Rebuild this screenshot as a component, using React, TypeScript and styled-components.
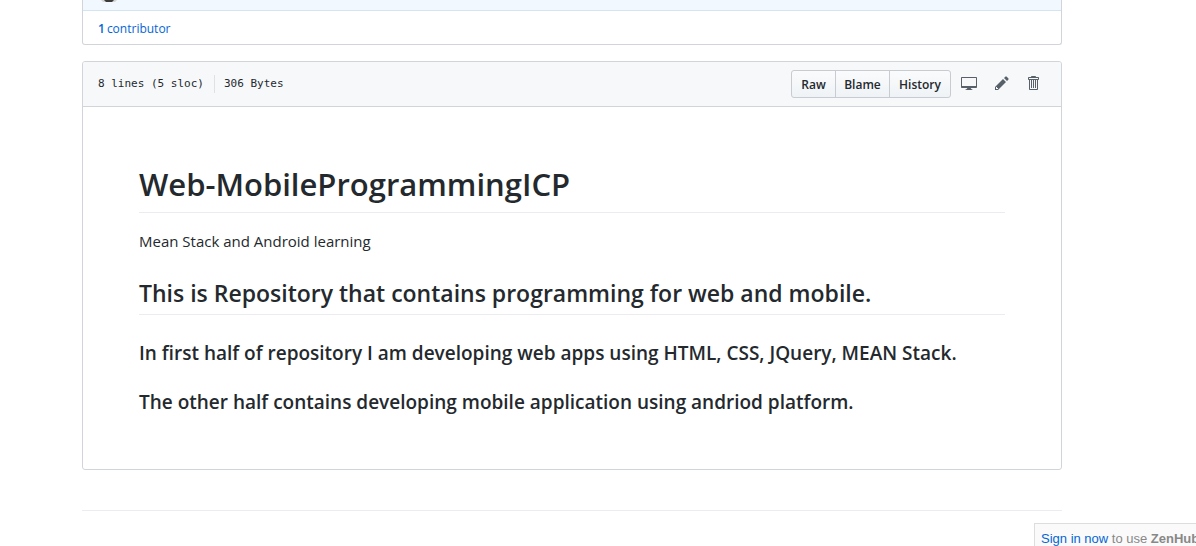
import React from "react";
import styled, { createGlobalStyle } from "styled-components";

const Global = createGlobalStyle`
  *, *::before, *::after { box-sizing: border-box; }
  body { margin: 0; background: #fff; color: #24292e; font: 14px/21px "Open Sans", sans-serif; }
  a { color: #0366d6; text-decoration: none; }
`;

const Page = styled.main`
  padding: 0 134px 32px 82px;
`;

const CommitCard = styled.section`
  border: 1px solid #d1d5da;
  border-top: 0;
  border-radius: 0 0 3px 3px;
`;

const CommitStrip = styled.div`
  display: flex;
  align-items: flex-start;
  height: 11px;
  padding: 0 16px;
  background: #f1f8ff;
  border-bottom: 1px solid #d4e4f2;
`;

const Contributors = styled.div`
  display: flex;
  align-items: center;
  height: 33px;
  padding: 2px 15px 0;
  font-size: 12px;
  a { display: flex; gap: 2px; }
  strong { font-weight: 600; }
`;

const FileCard = styled.section`
  margin-top: 16px;
  border: 1px solid #d1d5da;
  border-radius: 3px;
`;

const FileHeader = styled.header`
  display: flex;
  align-items: center;
  justify-content: space-between;
  height: 45px;
  padding: 0 22px 0 15px;
  background: #f6f8fa;
  border-bottom: 1px solid #d1d5da;
  border-radius: 3px 3px 0 0;
`;

const FileInfo = styled.div`
  display: flex;
  align-items: center;
  font: 11px/18px "DejaVu Sans Mono", monospace;
  span + span { margin-left: 10px; padding-left: 9px; border-left: 1px solid #dfe2e5; }
`;

const Actions = styled.div`
  display: flex;
  align-items: center;
`;

const ButtonGroup = styled.div`
  display: flex;
  margin-right: 10px;
`;

const SmallButton = styled.button<{ $width: number }>`
  width: ${(p) => p.$width}px;
  height: 28px;
  margin: 0 0 0 -1px;
  padding: 2px 0 0;
  border: 1px solid #c8cbcf;
  background: linear-gradient(#fafbfc, #eff3f6);
  color: #24292e;
  font: 600 12px/20px "Open Sans", sans-serif;
  cursor: pointer;
  &:first-child { border-radius: 3px 0 0 3px; }
  &:last-child { border-radius: 0 3px 3px 0; }
`;

const IconGroup = styled.div`
  display: flex;
  align-items: center;
  gap: 18px;
`;

const IconButton = styled.button`
  display: flex;
  padding: 0 0 2px;
  border: 0;
  background: none;
  color: #586069;
  cursor: pointer;
  svg { fill: currentColor; }
`;

const Readme = styled.article`
  padding: 56px 56px 53px;
`;

const Title = styled.h1`
  margin: 0 0 16px;
  padding-bottom: 6px;
  border-bottom: 1px solid #eaecef;
  font-size: 31px;
  line-height: 43px;
  font-weight: 600;
`;

const Paragraph = styled.p`
  margin: 0 0 24px;
  font-size: 15px;
  line-height: 24px;
`;

const Subtitle = styled.h2`
  margin: 0 0 24px;
  padding-bottom: 5px;
  border-bottom: 1px solid #eaecef;
  font-size: 23px;
  line-height: 32px;
  font-weight: 600;
`;

const Heading = styled.h3`
  margin: 0 0 21px;
  font-size: 19px;
  line-height: 28px;
  font-weight: 600;
  &:last-child { margin: 0; }
`;

const Divider = styled.hr`
  margin: 40px 0 0;
  border: 0;
  border-top: 1px solid #eaecef;
`;

const SignInBar = styled.aside`
  position: fixed;
  right: 0;
  bottom: 0;
  width: 162px;
  height: 23px;
  padding: 6px 0 0 6px;
  overflow: hidden;
  white-space: nowrap;
  background: #fafafa;
  border: 1px solid #ddd;
  border-width: 1px 0 0 1px;
  color: #888;
  font: 13px/18px "Liberation Sans", sans-serif;
`;

export default function App() {
  return (
    <>
      <Global />
      <Page>
        <CommitCard>
          <CommitStrip>
            <svg width="20" height="3" viewBox="0 0 20 3" aria-hidden="true">
              <path d="M2 0h16l-2 2H4z" fill="#d5d5d2" />
              <path d="M5 0h10l-2 2H7z" fill="#3b3b3b" />
            </svg>
          </CommitStrip>
          <Contributors>
            <a href="#contributors"><strong>1</strong> contributor</a>
          </Contributors>
        </CommitCard>
        <FileCard>
          <FileHeader>
            <FileInfo>
              <span>8 lines (5 sloc)</span>
              <span>306 Bytes</span>
            </FileInfo>
            <Actions>
              <ButtonGroup>
                <SmallButton $width={45}>Raw</SmallButton>
                <SmallButton $width={55}>Blame</SmallButton>
                <SmallButton $width={62}>History</SmallButton>
              </ButtonGroup>
              <IconGroup>
                <IconButton aria-label="Open in desktop">
                  <svg width="16" height="16" viewBox="0 0 16 16">
                    <path d="M15 2H1c-.55 0-1 .45-1 1v9c0 .55.45 1 1 1h5.34c-.25.61-.86 1.39-2.34 2h8c-1.48-.61-2.09-1.39-2.34-2H15c.55 0 1-.45 1-1V3c0-.55-.45-1-1-1zm0 9H1V3h14v8z" />
                  </svg>
                </IconButton>
                <IconButton aria-label="Edit this file">
                  <svg width="14" height="16" viewBox="0 0 14 16">
                    <path d="M0 12v3h3l8-8-3-3-8 8zm3 2H1v-2h1v1h1v1zm10.3-9.3L12 6 9 3l1.3-1.3a.996.996 0 0 1 1.41 0l1.59 1.59c.39.39.39 1.02 0 1.41z" />
                  </svg>
                </IconButton>
                <IconButton aria-label="Delete this file">
                  <svg width="12" height="16" viewBox="0 0 12 16">
                    <path d="M11 2H9c0-.55-.45-1-1-1H5c-.55 0-1 .45-1 1H2c-.55 0-1 .45-1 1v1c0 .55.45 1 1 1v9c0 .55.45 1 1 1h7c.55 0 1-.45 1-1V5c.55 0 1-.45 1-1V3c0-.55-.45-1-1-1zm-1 12H3V5h1v8h1V5h1v8h1V5h1v8h1V5h1v9zm1-10H2V3h9v1z" />
                  </svg>
                </IconButton>
              </IconGroup>
            </Actions>
          </FileHeader>
          <Readme>
            <Title>Web-MobileProgrammingICP</Title>
            <Paragraph>Mean Stack and Android learning</Paragraph>
            <Subtitle>This is Repository that contains programming for web and mobile.</Subtitle>
            <Heading>In first half of repository I am developing web apps using HTML, CSS, JQuery, MEAN Stack.</Heading>
            <Heading>The other half contains developing mobile application using andriod platform.</Heading>
          </Readme>
        </FileCard>
        <Divider />
      </Page>
      <SignInBar>
        <a href="#signin">Sign in now</a> to use <strong>ZenHub</strong>
      </SignInBar>
    </>
  );
}
